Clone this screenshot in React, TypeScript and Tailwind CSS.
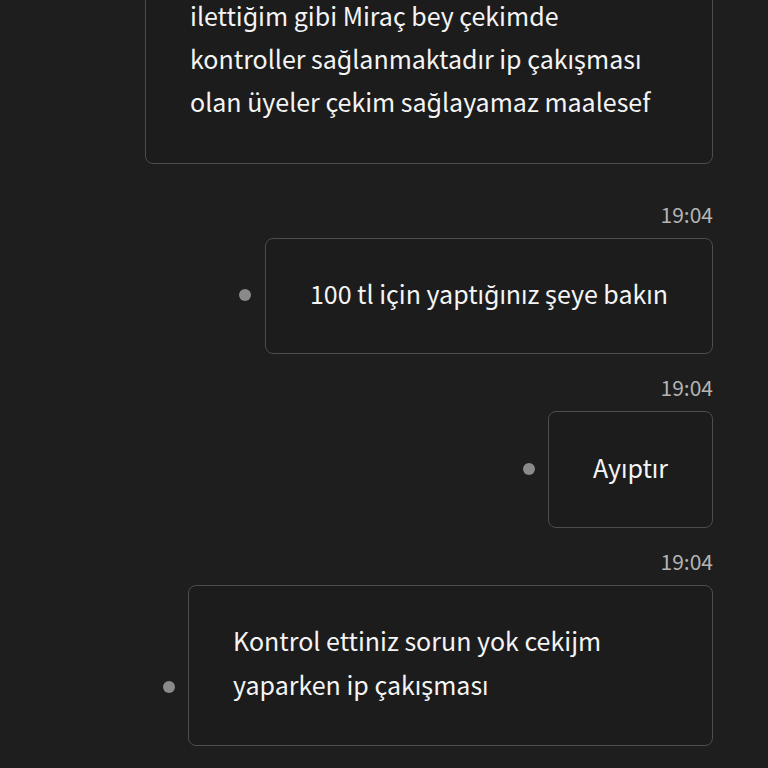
import React from "react";

const font = { fontFamily: '"Noto Sans CJK SC", "Noto Sans", sans-serif' };

function Dot() {
  return <span className="mb-[53px] h-3 w-3 shrink-0 rounded-full bg-[#8a8a8a]" />;
}

function Time() {
  return <div className="text-right text-[21px] leading-6 text-[#b4b4b4]">19:04</div>;
}

export default function App() {
  return (
    <div
      className="h-[768px] w-[768px] overflow-hidden bg-[#1e1e1e] pr-[55px] text-[#f4f4f4]"
      style={font}
    >
      <div className="flex flex-col">
        <div className="-mt-[43px] ml-[145px] rounded-lg border border-[#4d4d4d] bg-[#1c1c1c] pb-10 pl-11 pt-9 text-[25px] leading-[43px]">
          <p>iletti&#287;im gibi Mira&#231; bey &#231;ekimde</p>
          <p>kontroller sa&#287;lanmaktad&#305;r ip &#231;ak&#305;&#351;mas&#305;</p>
          <p>olan &#252;yeler &#231;ekim sa&#287;layamaz maalesef</p>
        </div>

        <div className="mt-[38px]">
          <Time />
        </div>
        <div className="mt-3 flex items-end justify-end gap-[14px]">
          <Dot />
          <div className="rounded-lg border border-[#4d4d4d] bg-[#1c1c1c] px-11 pb-[38px] pt-8 text-[25px] leading-[44px]">
            100 tl i&#231;in yapt&#305;&#287;&#305;n&#305;z &#351;eye bak&#305;n
          </div>
        </div>

        <div className="mt-[21px]">
          <Time />
        </div>
        <div className="mt-3 flex items-end justify-end gap-[13px]">
          <Dot />
          <div className="rounded-lg border border-[#4d4d4d] bg-[#1c1c1c] px-11 pb-[38px] pt-[33px] text-[25px] leading-[44px]">
            Ay&#305;pt&#305;r
          </div>
        </div>

        <div className="mt-[21px]">
          <Time />
        </div>
        <div className="mt-3 flex items-end justify-end gap-[13px]">
          <Dot />
          <div className="w-[525px] rounded-lg border border-[#4d4d4d] bg-[#1c1c1c] pb-[39px] pl-11 pr-[90px] pt-8 text-[25px] leading-[44px]">
            Kontrol ettiniz sorun yok cekijm yaparken ip &#231;ak&#305;&#351;mas&#305;
          </div>
        </div>
      </div>
    </div>
  );
}
